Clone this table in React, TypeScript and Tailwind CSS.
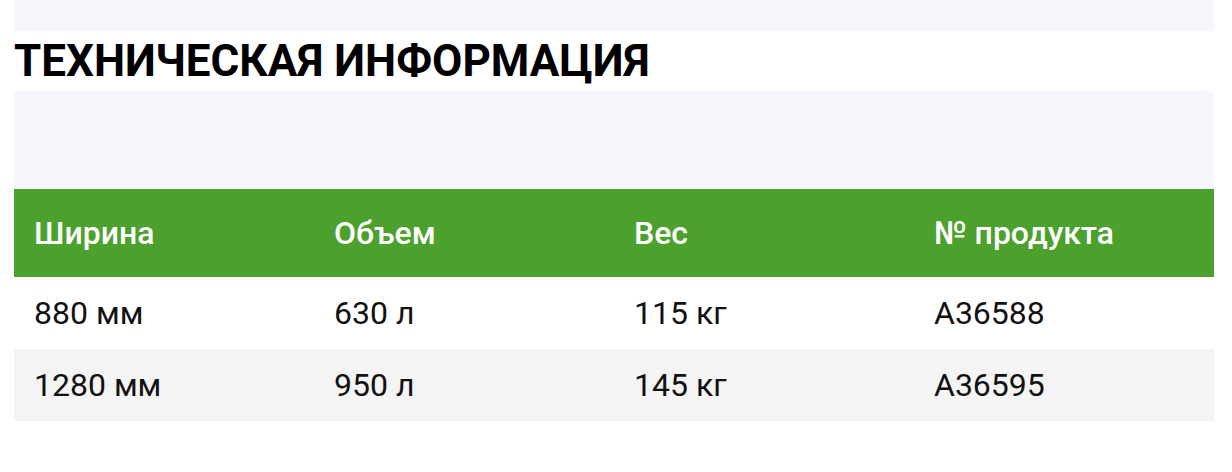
const rows = [
  ["880 мм", "630 л", "115 кг", "A36588"],
  ["1280 мм", "950 л", "145 кг", "A36595"],
];

const head = ["Ширина", "Объем", "Вес", "№ продукта"];

export default function App() {
  return (
    <div className="min-h-[472px] bg-white font-['Roboto',sans-serif] text-[#111]">
      <div className="mx-[14px] w-[1200px]">
        <div className="h-[31px] bg-[#f6f7fc]" />
        <h2 className="h-[60px] text-[44px] font-bold uppercase leading-[60px] text-black">
          Техническая информация
        </h2>
        <div className="h-[98px] bg-[#f6f7fc]" />
        <table className="w-full table-fixed border-collapse">
          <thead>
            <tr className="h-[88px] bg-[#4ba02e] text-white">
              {head.map((h) => (
                <th key={h} className="px-5 text-left text-[32px] font-medium">
                  {h}
                </th>
              ))}
            </tr>
          </thead>
          <tbody>
            {rows.map((r, i) => (
              <tr key={i} className={i % 2 ? "h-[72px] bg-[#f4f4f4]" : "h-[72px] bg-white"}>
                {r.map((c, j) => (
                  <td key={j} className="px-5 text-[32px]">
                    {c}
                  </td>
                ))}
              </tr>
            ))}
          </tbody>
        </table>
      </div>
    </div>
  );
}
